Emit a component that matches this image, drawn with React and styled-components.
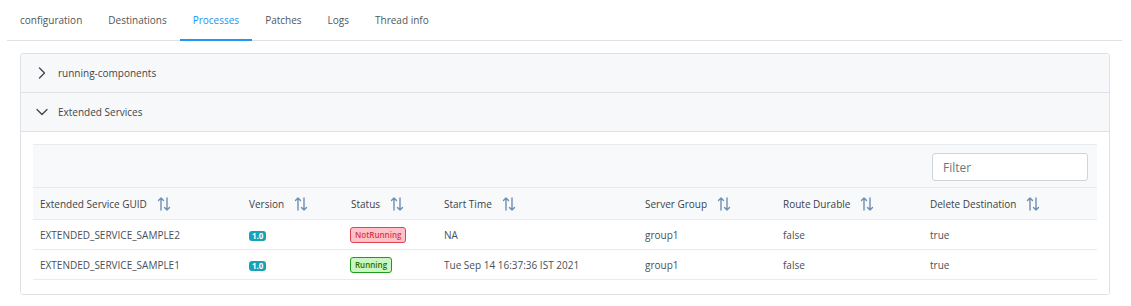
import React from "react";
import styled, { createGlobalStyle } from "styled-components";

const GlobalStyle = createGlobalStyle`
  body {
    margin: 0;
    background: #ffffff;
    font-family: "Open Sans", "Liberation Sans", sans-serif;
    color: #495057;
  }
`;

const Page = styled.div`
  padding: 0 9px 0 7px;
`;

const TabBar = styled.div`
  display: flex;
  border-bottom: 1px solid #dee2e6;
  height: 40px;
`;

const Tab = styled.div`
  padding: 0 13px;
  display: flex;
  align-items: center;
  font-size: 10px;
  font-weight: 500;
  color: ${(p) => (p.active ? "#2196f3" : "#50565c")};
  border-bottom: 2px solid ${(p) => (p.active ? "#2196f3" : "transparent")};
  margin-bottom: -1px;
  padding-top: 1px;
`;

const Panel = styled.div`
  margin: 12px 12px 0 13px;
  border: 1px solid #dee2e6;
  border-radius: 3px;
  overflow: hidden;
`;

const AccordionHeader = styled.div`
  height: 38px;
  display: flex;
  align-items: center;
  gap: 10px;
  padding-left: 15px;
  background: #f7f8fa;
  font-size: 10px;
  font-weight: 500;
  color: #40464c;
  border-bottom: 1px solid #dee2e6;
`;

const Body = styled.div`
  padding: 12px 12px 14px 12px;
  background: #fff;
`;

const Toolbar = styled.div`
  background: #f8f9fa;
  border-top: 1px solid #e9ecef;
  display: flex;
  justify-content: flex-end;
  padding: 8px 9px 6px 0;
`;

const FilterInput = styled.input`
  width: 156px;
  height: 28px;
  box-sizing: border-box;
  border: 1px solid #ced4da;
  border-radius: 3px;
  padding: 0 10px;
  font-family: "Open Sans", "Liberation Sans", sans-serif;
  font-size: 12px;
  color: #495057;
  &::placeholder {
    color: #6c757d;
  }
`;

const Table = styled.table`
  width: 100%;
  border-collapse: collapse;
  table-layout: fixed;
  font-size: 10px;
`;

const Th = styled.th`
  text-align: left;
  font-weight: 400;
  color: #3c4248;
  background: #f8f9fa;
  height: 31px;
  padding: 0 7px;
  border-top: 1px solid #e9ecef;
  border-bottom: 1px solid #e9ecef;
  white-space: nowrap;
`;

const Td = styled.td`
  height: 29px;
  padding: 0 7px;
  color: #495057;
  border-bottom: 1px solid #e9ecef;
  white-space: nowrap;
`;

const HeadInner = styled.span`
  display: inline-flex;
  align-items: center;
  gap: 10px;
`;

const Version = styled.span`
  display: inline-block;
  background: #17a2b8;
  color: #fff;
  font-weight: 700;
  font-size: 8px;
  line-height: 10px;
  padding: 0 3px;
  border-radius: 3px;
  vertical-align: middle;
`;

const Status = styled.span`
  display: inline-block;
  font-size: 8px;
  font-weight: 600;
  line-height: 14px;
  padding: 0 4px;
  border-radius: 3px;
  border: 1px solid ${(p) => (p.ok ? "#1e9a1e" : "#e2414f")};
  background: ${(p) => (p.ok ? "#c9f7c2" : "#ffc2c8")};
  color: ${(p) => (p.ok ? "#2c6a00" : "#dc3545")};
  margin-left: -1px;
`;

const SortIcon = () => (
  <svg width="14" height="16" viewBox="0 0 14 16" fill="none" stroke="#6f8db0" strokeWidth="1.4" strokeLinecap="round" strokeLinejoin="round">
    <path d="M4 14V2M1.5 4.5L4 2l2.5 2.5" />
    <path d="M10 2v12M7.5 11.5L10 14l2.5-2.5" />
  </svg>
);

const Chevron = ({ open }) => (
  <svg width="12" height="12" viewBox="0 0 12 12" fill="none" stroke="#40464c" strokeWidth="1.3" strokeLinecap="round" strokeLinejoin="round">
    {open ? <path d="M1 3.5l5 5 5-5" /> : <path d="M3.5 1l5 5-5 5" />}
  </svg>
);

const columns = [
  ["Extended Service GUID", 209],
  ["Version", 102],
  ["Status", 93],
  ["Start Time", 201],
  ["Server Group", 138],
  ["Route Durable", 147],
  ["Delete Destination", 174],
];

const rows = [
  { guid: "EXTENDED_SERVICE_SAMPLE2", version: "1.0", status: "NotRunning", start: "NA", group: "group1", durable: "false", del: "true" },
  { guid: "EXTENDED_SERVICE_SAMPLE1", version: "1.0", status: "Running", start: "Tue Sep 14 16:37:36 IST 2021", group: "group1", durable: "false", del: "true" },
];

const tabs = ["configuration", "Destinations", "Processes", "Patches", "Logs", "Thread info"];

const App = () => {
  return (
    <Page>
      <GlobalStyle />
      <TabBar>
        {tabs.map((t) => (
          <Tab key={t} active={t === "Processes"}>{t}</Tab>
        ))}
      </TabBar>
      <Panel>
        <AccordionHeader>
          <Chevron />
          running-components
        </AccordionHeader>
        <AccordionHeader>
          <Chevron open />
          Extended Services
        </AccordionHeader>
        <Body>
          <Toolbar>
            <FilterInput placeholder="Filter" />
          </Toolbar>
          <Table>
            <colgroup>
              {columns.map(([name, w]) => (
                <col key={name} style={{ width: w }} />
              ))}
            </colgroup>
            <thead>
              <tr>
                {columns.map(([name]) => (
                  <Th key={name}>
                    <HeadInner>
                      {name}
                      <SortIcon />
                    </HeadInner>
                  </Th>
                ))}
              </tr>
            </thead>
            <tbody>
              {rows.map((r) => (
                <tr key={r.guid}>
                  <Td>{r.guid}</Td>
                  <Td><Version>{r.version}</Version></Td>
                  <Td><Status ok={r.status === "Running"}>{r.status}</Status></Td>
                  <Td>{r.start}</Td>
                  <Td>{r.group}</Td>
                  <Td>{r.durable}</Td>
                  <Td>{r.del}</Td>
                </tr>
              ))}
            </tbody>
          </Table>
        </Body>
      </Panel>
    </Page>
  );
};

export default App;
